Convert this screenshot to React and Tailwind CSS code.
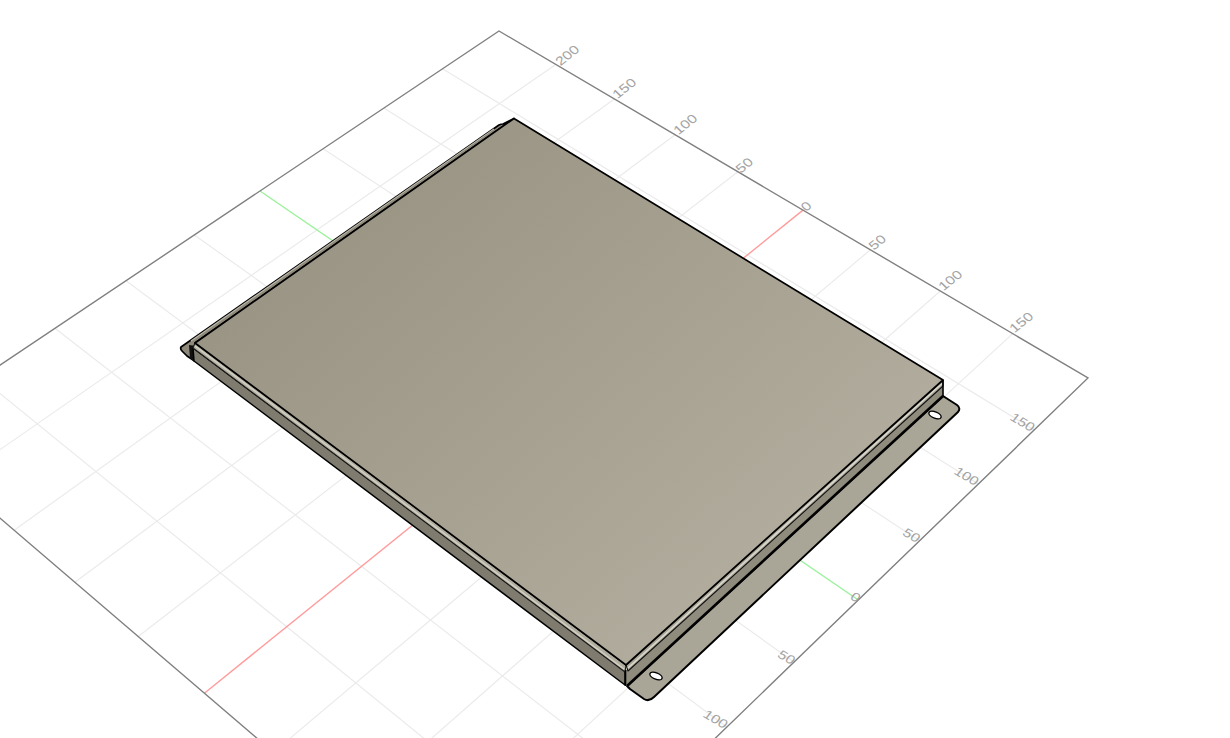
// cad viewer: plate on a perspective grid
// four known corners of the grid, in picture coordinates
const P0 = [499, 31]; // u=250 v=200
const P1 = [1088, 378]; // u=-200 v=200
const P2 = [858.3, 600]; // u=-200 v=0
const P3 = [260, 191]; // u=250 v=0

function makeProject() {
  const dx1 = P1[0] - P2[0];
  const dx2 = P3[0] - P2[0];
  const sx = P0[0] - P1[0] + P2[0] - P3[0];
  const dy1 = P1[1] - P2[1];
  const dy2 = P3[1] - P2[1];
  const sy = P0[1] - P1[1] + P2[1] - P3[1];
  const det = dx1 * dy2 - dx2 * dy1;
  const g = (sx * dy2 - dx2 * sy) / det;
  const h = (dx1 * sy - sx * dy1) / det;
  const a = P1[0] - P0[0] + g * P1[0];
  const b = P3[0] - P0[0] + h * P3[0];
  const c = P0[0];
  const d = P1[1] - P0[1] + g * P1[1];
  const e = P3[1] - P0[1] + h * P3[1];
  const f = P0[1];
  return (u, v) => {
    const s = (250 - u) / 450;
    const t = (200 - v) / 200;
    const w = g * s + h * t + 1;
    return [(a * s + b * t + c) / w, (d * s + e * t + f) / w];
  };
}

const project = makeProject();
const EDGE = -252.5; // near edge of the grid sits a little past -250
const US = [-150, -100, -50, 50, 100, 150, 200];
const VS = [-200, -150, -100, -50, 50, 100, 150];

function gridLine(p, q, color, width, key) {
  return <line key={key} x1={p[0]} y1={p[1]} x2={q[0]} y2={q[1]} stroke={color} strokeWidth={width} />;
}

const topLabels = [
  ["200", 568, 56],
  ["150", 625, 89],
  ["100", 686, 125],
  ["50", 745, 166],
  ["0", 807, 207],
  ["50", 878, 243],
  ["100", 951, 281],
  ["150", 1022, 323],
];

const sideLabels = [
  ["150", 1022, 423],
  ["100", 966, 477],
  ["50", 911, 536],
  ["0", 855, 598],
  ["50", 786, 658],
  ["100", 715, 720],
];

export default function App() {
  return (
    <div className="w-full h-screen bg-white overflow-hidden">
      <svg width="1230" height="738" viewBox="0 0 1230 738" className="block">
        <defs>
          <linearGradient id="topFace" gradientUnits="userSpaceOnUse" x1="330" y1="200" x2="740" y2="660">
            <stop offset="0" stopColor="#9a9484" />
            <stop offset="1" stopColor="#b3ae9f" />
          </linearGradient>
        </defs>

        {/* grid */}
        {US.map((u) => gridLine(project(u, EDGE), project(u, 200), "#ebebeb", 1.2, "u" + u))}
        {VS.map((v) => gridLine(project(-200, v), project(250, v), "#ebebeb", 1.2, "v" + v))}
        {gridLine(project(0, EDGE), project(0, 200), "#ff9c9c", 1.4, "red")}
        {gridLine(project(250, 0), project(-200, 0), "#9cf29c", 1.4, "green")}

        {/* outer frame */}
        <polygon
          points={[project(250, 200), project(-200, 200), project(-200, EDGE), project(250, EDGE)]
            .map((p) => p.join(","))
            .join(" ")}
          fill="none"
          stroke="#808080"
          strokeWidth="1.4"
        />

        {/* axis numbers, laid flat on the grid plane */}
        {topLabels.map(([t, x, y], i) => (
          <text
            key={"t" + i}
            textAnchor="middle"
            dominantBaseline="middle"
            transform={`matrix(0.86 -0.68 0.66 0.64 ${x} ${y})`}
            className="font-['Liberation_Sans'] text-[14px] fill-[#a3a3a3]"
          >
            {t}
          </text>
        ))}
        {sideLabels.map(([t, x, y], i) => (
          <text
            key={"s" + i}
            textAnchor="middle"
            dominantBaseline="middle"
            transform={`matrix(0.94 0.55 -0.56 0.72 ${x} ${y})`}
            className="font-['Liberation_Sans'] text-[14px] fill-[#a3a3a3]"
          >
            {t}
          </text>
        ))}

        {/* back flange */}
        <path
          d="M181 347 L499 125 Q501 124 503 124 L514 118.5 L195 343 L193 360 L187 356 L182 351 Q180 349 181 347 Z"
          fill="#8d8879"
          stroke="#000"
          strokeWidth="1.7"
          strokeLinejoin="round"
        />
        <path d="M189 345 L190 358 L194 362 L196 346 Z" fill="#111" />
        <line x1="191" y1="341" x2="494" y2="129" stroke="#bdb9ac" strokeWidth="1.2" />

        {/* front long side */}
        <polygon points="193,348 625,671 625,685 194,361" fill="#7f7b6e" stroke="#000" strokeWidth="1.5" strokeLinejoin="round" />
        <polygon points="195,343 626,665 625,672 193,348" fill="#b0ad9f" stroke="#1a1a1a" strokeWidth="1.1" strokeLinejoin="round" />
        <line x1="195" y1="346" x2="624" y2="669" stroke="#d2cfc5" strokeWidth="1.4" />

        {/* bottom flange */}
        <path
          d="M627 686 L943 396 L957 405 Q961 408 958 412 L654 697 Q649 702 644 699 L630 689 Z"
          fill="#a9a597"
          stroke="#000"
          strokeWidth="2"
          strokeLinejoin="round"
        />
        <ellipse cx="935" cy="415" rx="6.5" ry="3.2" transform="rotate(22 935 415)" fill="#fff" stroke="#000" strokeWidth="1.4" />
        <ellipse cx="656" cy="676" rx="6.5" ry="3.2" transform="rotate(22 656 676)" fill="#fff" stroke="#000" strokeWidth="1.4" />

        {/* right side */}
        <polygon points="625,671 943,385 943,396 627,686 625,686" fill="#8f8b7d" />
        <line x1="627" y1="686" x2="943" y2="396" stroke="#000" strokeWidth="2.6" />
        <polygon points="626,665 943,380 943,386 628,671" fill="#a8a496" stroke="#111" strokeWidth="1.1" strokeLinejoin="round" />
        <line x1="628" y1="668" x2="942" y2="383.5" stroke="#dcd9cf" strokeWidth="1.6" />
        <line x1="625.5" y1="670" x2="625.5" y2="686" stroke="#000" strokeWidth="1.6" />
        <line x1="943" y1="380" x2="943" y2="396" stroke="#000" strokeWidth="1.6" />

        {/* top */}
        <polygon points="514,118.5 943,380 626,665 195,343" fill="url(#topFace)" stroke="#000" strokeWidth="1.7" strokeLinejoin="round" />
      </svg>
    </div>
  );
}
